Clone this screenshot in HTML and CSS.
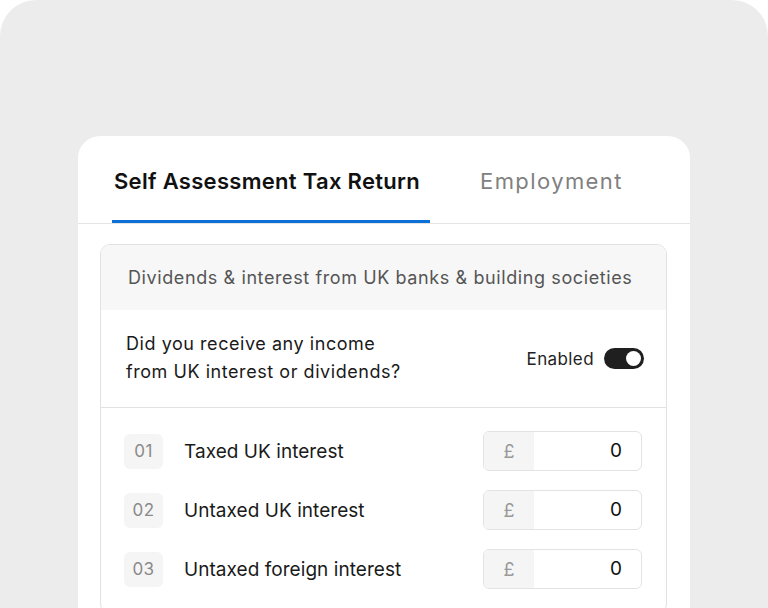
FILE: index.html
```html
<!DOCTYPE html>
<html lang="en">
<head>
<meta charset="utf-8">
<title>Self Assessment Tax Return</title>
<link rel="stylesheet" href="styles.css">
</head>
<body>
<div class="frame">
  <div class="card">
    <div class="tabs">
      <div class="tab active">Self Assessment Tax Return</div>
      <div class="tab">Employment</div>
    </div>
    <div class="content">
      <div class="section">
        <div class="section-head">Dividends &amp; interest from UK banks &amp; building societies</div>
        <div class="question">
          <div class="q-text">Did you receive any income<br>from UK interest or dividends?</div>
          <div class="q-toggle">
            <span class="toggle-label">Enabled</span>
            <span class="toggle"><span class="knob"></span></span>
          </div>
        </div>
        <div class="rows">
          <div class="row">
            <span class="num">01</span>
            <span class="label">Taxed UK interest</span>
            <div class="money"><span class="cur">£</span><span class="val">0</span></div>
          </div>
          <div class="row">
            <span class="num">02</span>
            <span class="label">Untaxed UK interest</span>
            <div class="money"><span class="cur">£</span><span class="val">0</span></div>
          </div>
          <div class="row">
            <span class="num">03</span>
            <span class="label">Untaxed foreign interest</span>
            <div class="money"><span class="cur">£</span><span class="val">0</span></div>
          </div>
        </div>
      </div>
    </div>
  </div>
</div>
</body>
</html>
```
FILE: styles.css
```css
* { box-sizing: border-box; }
html, body { margin: 0; padding: 0; background: #ffffff; }
body {
  font-family: Inter, "Noto Sans", "Liberation Sans", sans-serif;
  color: #1a1a1a;
  width: 768px;
  height: 608px;
  overflow: hidden;
}
.frame {
  background: #ececec;
  border-radius: 36px 36px 0 0;
  height: 608px;
  padding: 136px 78px 0 78px;
  overflow: hidden;
}
.card {
  background: #ffffff;
  border-radius: 22px 22px 0 0;
  height: 520px;
}
.tabs {
  display: flex;
  height: 88px;
  border-bottom: 1px solid #e4e4e4;
  padding-left: 34px;
  gap: 50px;
}
.tab {
  display: flex;
  align-items: center;
  justify-content: center;
  padding: 6px 0 0 0;
  font-size: 22px;
  font-weight: 400;
  letter-spacing: 1.4px;
  color: #808080;
  border-bottom: 3px solid transparent;
}
.tab.active {
  color: #111111;
  font-weight: 600;
  letter-spacing: 0.3px;
  padding: 6px 10px 0 2px;
  border-bottom-color: #0b6fd8;
  border-radius: 2px 2px 0 0;
}
.content {
  padding: 20px 23px 0 22px;
}
.section {
  border: 1px solid #e2e2e2;
  border-radius: 10px;
  overflow: hidden;
}
.section-head {
  background: #f7f7f7;
  height: 65px;
  display: flex;
  align-items: center;
  padding-left: 27px;
  font-size: 18px;
  letter-spacing: 0.6px;
  color: #555555;
}
.question {
  display: flex;
  justify-content: space-between;
  align-items: center;
  height: 98px;
  padding: 0 22px 0 25px;
  border-bottom: 1px solid #e2e2e2;
}
.q-text {
  font-size: 18px;
  line-height: 28px;
  letter-spacing: 0.55px;
  color: #1a1a1a;
  margin-top: -1px;
}
.q-toggle {
  display: flex;
  align-items: center;
  gap: 10px;
}
.toggle-label {
  font-size: 17px;
  letter-spacing: 0.4px;
  color: #222222;
}
.toggle {
  width: 40px;
  height: 21px;
  border-radius: 11px;
  background: #1f1f1f;
  display: flex;
  align-items: center;
  justify-content: flex-end;
  padding-right: 3px;
}
.knob {
  width: 15px;
  height: 15px;
  border-radius: 50%;
  background: #ffffff;
}
.rows {
  display: flex;
  flex-direction: column;
  gap: 19px;
  padding: 23px 24px 24px 23px;
}
.row {
  display: flex;
  align-items: center;
  height: 40px;
}
.num {
  width: 39px;
  height: 35px;
  border-radius: 6px;
  background: #f5f5f5;
  color: #8a8a8a;
  font-size: 17px;
  letter-spacing: 0.4px;
  display: flex;
  align-items: center;
  justify-content: center;
}
.label {
  margin-left: 21px;
  font-size: 19px;
  letter-spacing: 0.05px;
  color: #1a1a1a;
  flex: 1;
}
.money {
  width: 159px;
  height: 40px;
  border: 1px solid #e3e3e3;
  border-radius: 6px;
  display: flex;
  overflow: hidden;
}
.cur {
  width: 50px;
  background: #f5f5f5;
  color: #999999;
  font-size: 18px;
  display: flex;
  align-items: center;
  justify-content: center;
}
.val {
  flex: 1;
  text-align: right;
  padding-right: 19px;
  font-size: 19px;
  line-height: 38px;
  color: #111111;
}
```
